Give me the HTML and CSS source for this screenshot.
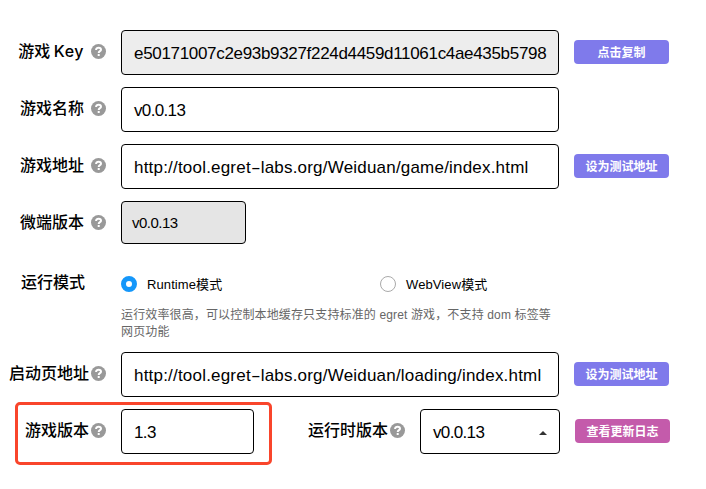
FILE: index.html
```
<!DOCTYPE html>
<html lang="zh-CN">
<head>
<meta charset="utf-8">
<title>游戏版本</title>
<link rel="stylesheet" href="styles.css">
</head>
<body>
<svg class="defs" aria-hidden="true">
  <symbol id="help" viewBox="0 0 15 15">
    <circle cx="7.5" cy="7.5" r="7.5" fill="#999"/>
    <path d="M5.1 6.1C5.1 4.5 6.1 3.8 7.6 3.8C9.1 3.8 10 4.6 10 5.7C10 7.2 7.7 7.2 7.7 9" fill="none" stroke="#fff" stroke-width="2"/>
    <rect x="6.7" y="10" width="2" height="2" fill="#fff"/>
  </symbol>
</svg>
<form class="form">
  <div class="row">
    <div class="label"><span>游戏 <span class="latin">Key</span></span><svg class="help"><use href="#help"/></svg></div>
    <div class="field disabled"><span class="hash">e50171007c2e93b9327f224d4459d11061c4ae435b5798</span></div>
    <button type="button" class="btn">点击复制</button>
  </div>
  <div class="row">
    <div class="label"><span>游戏名称</span><svg class="help"><use href="#help"/></svg></div>
    <div class="field"><span class="version">v0.0.13</span></div>
  </div>
  <div class="row">
    <div class="label"><span>游戏地址</span><svg class="help"><use href="#help"/></svg></div>
    <div class="field"><span class="url">http://tool.egret<span class="dash">-</span>labs.org/Weiduan/game/index.html</span></div>
    <button type="button" class="btn">设为测试地址</button>
  </div>
  <div class="row short">
    <div class="label"><span>微端版本</span><svg class="help"><use href="#help"/></svg></div>
    <div class="field small"><span>v0.0.13</span></div>
  </div>
  <div class="row modes">
    <div class="label plain"><span>运行模式</span></div>
    <div class="choices">
      <div class="options">
        <div class="option"><i class="radio on"></i><span>Runtime模式</span></div>
        <div class="option"><i class="radio"></i><span>WebView模式</span></div>
      </div>
      <p class="hint">运行效率很高，可以控制本地缓存只支持标准的 egret 游戏，不支持 dom 标签等<br>网页功能</p>
    </div>
  </div>
  <div class="row">
    <div class="label tight"><span>启动页地址</span><svg class="help"><use href="#help"/></svg></div>
    <div class="field"><span class="url">http://tool.egret<span class="dash">-</span>labs.org/Weiduan/loading/index.html</span></div>
    <button type="button" class="btn">设为测试地址</button>
  </div>
  <div class="row last">
    <div class="label tight"><span>游戏版本</span><svg class="help"><use href="#help"/></svg></div>
    <div class="field"><span class="version">1.3</span></div>
    <div class="label tight"><span>运行时版本</span><svg class="help"><use href="#help"/></svg></div>
    <div class="field select"><span class="version">v0.0.13</span><i class="caret"></i></div>
    <button type="button" class="btn pink">查看更新日志</button>
    <div class="highlight"></div>
  </div>
</form>
</body>
</html>
```
FILE: styles.css
```
* { box-sizing: border-box; }
body {
  margin: 0;
  background: #fff;
  color: #000;
  font-family: "Liberation Sans", "Noto Sans CJK SC", sans-serif;
}
.defs { position: absolute; width: 0; height: 0; }
.form {
  display: flex;
  flex-direction: column;
  gap: 12px;
  min-height: 489px;
  padding-top: 30px;
}
.row {
  position: relative;
  display: grid;
  grid-template-columns: 106px 438px 95px;
  column-gap: 15px;
  height: 45px;
}
.label {
  display: flex;
  align-items: center;
  justify-content: flex-end;
  gap: 7px;
  height: 43px;
  font: 500 16px/24px "Noto Sans CJK SC", sans-serif;
  white-space: nowrap;
}
.label > span { padding-bottom: 3px; }
.latin {
  font-family: Inter, sans-serif;
  font-weight: 500;
  letter-spacing: 0.5px;
}
.label.tight { gap: 2px; }
.help { width: 15px; height: 15px; flex: none; }
.field {
  display: flex;
  align-items: center;
  border: 1px solid #000;
  border-radius: 4px;
  padding: 2px 12px 0;
  font-size: 17px;
  line-height: 24px;
  white-space: nowrap;
}
.disabled { background: #ededed; }
.hash { letter-spacing: -0.32px; }
.version { letter-spacing: -0.65px; }
.url { letter-spacing: 0.2px; }
.dash {
  display: inline-block;
  margin: 0 2px;
  transform: scaleX(1.7);
}
.short { height: 43px; }
.small {
  width: 125px;
  padding: 1px 10px 0;
  background: #e5e5e5;
  font-size: 15px;
  letter-spacing: -0.5px;
}
.btn {
  height: 24px;
  margin-top: 10px;
  padding: 0;
  border: 0;
  border-radius: 4px;
  background: #7f7aeb;
  color: #fff;
  font: bold 12px/24px "Noto Sans CJK SC", sans-serif;
}
.pink { background: #c45bab; }
.modes { height: 84px; }
.plain { padding-right: 21px; height: 53px; }
.choices { padding-top: 20px; }
.options { display: flex; height: 16px; }
.option {
  display: flex;
  flex: none;
  align-items: center;
  gap: 10px;
  width: 259px;
  font-size: 13px;
  line-height: 16px;
  letter-spacing: 0.1px;
}
.option span { padding-top: 1px; }
.radio {
  width: 16px;
  height: 16px;
  border: 1px solid #aaa;
  border-radius: 50%;
}
.radio.on { border: 5px solid #1597fa; }
.hint {
  margin: 15px 0 0;
  color: #666;
  font: 12px/17px "Liberation Sans", "Noto Sans CJK SC", sans-serif;
  letter-spacing: 0.14px;
  white-space: nowrap;
}
.last { grid-template-columns: 106px 133px 136px 140px 95px; }
.select { justify-content: space-between; }
.caret {
  border: 4px solid transparent;
  border-top: 0;
  border-bottom-color: #333;
}
.highlight {
  position: absolute;
  left: 15px;
  top: -7px;
  width: 257px;
  height: 63px;
  border: 3px solid #f9452b;
  border-radius: 5px;
}
```
